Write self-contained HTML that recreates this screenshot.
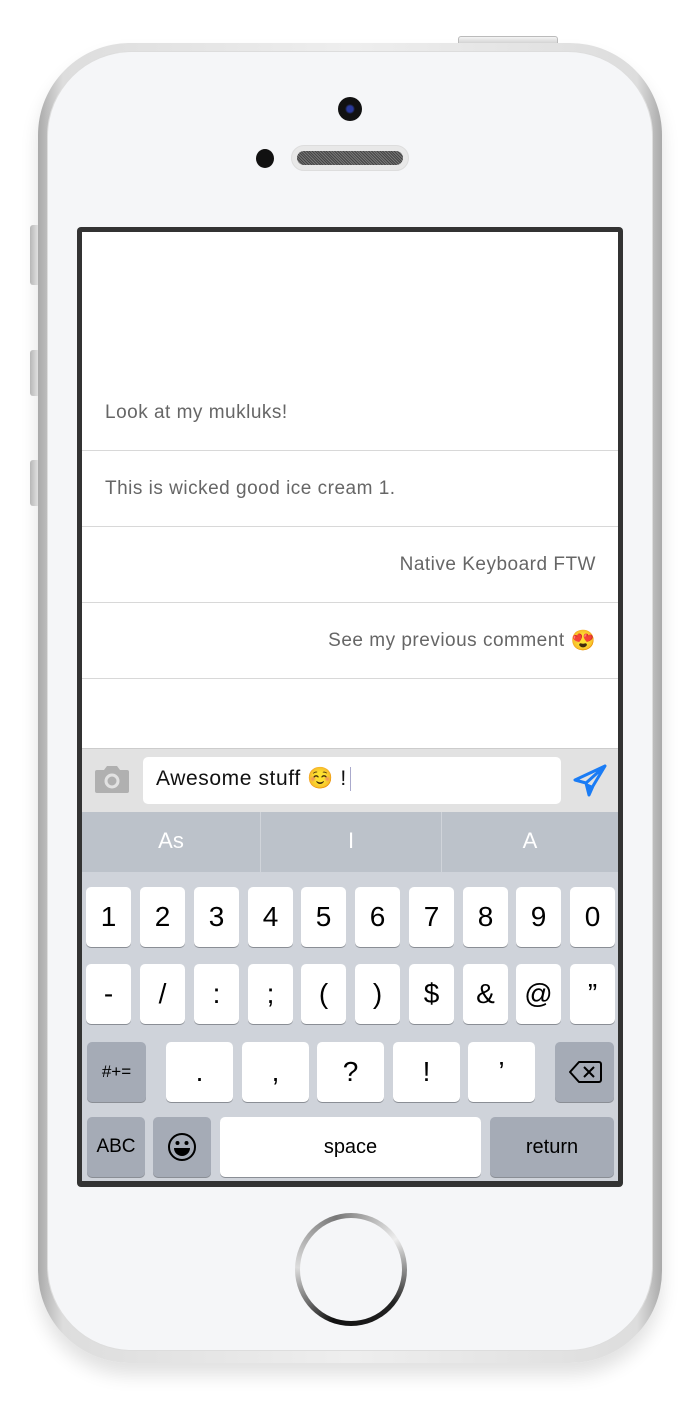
<!DOCTYPE html><html><head><style>
*{margin:0;padding:0;box-sizing:border-box}
body{width:700px;height:1413px;background:#fff;position:relative;overflow:hidden;font-family:"Liberation Sans",sans-serif}
.a{position:absolute}
.key{position:absolute;background:#fff;border-radius:5px;box-shadow:0 1px 0 #8a8e95;display:flex;align-items:center;justify-content:center;font-size:28px;color:#000}
.dk{background:#a5abb6}
.row{position:absolute;left:82px;width:536px;height:76px;border-bottom:1px solid #d8d8d8;font-size:19px;letter-spacing:.5px;color:#666;padding:0 22px;display:flex;align-items:center}
</style></head><body>
<div class="a" style="left:458px;top:36px;width:100px;height:10px;background:linear-gradient(#f4f4f4,#ccc);border-radius:3px 3px 0 0;border:1px solid #bbb"></div>
<div class="a" style="left:30px;top:225px;width:8px;height:60px;background:linear-gradient(90deg,#bbb,#eee);border-radius:3px 0 0 3px"></div>
<div class="a" style="left:30px;top:350px;width:8px;height:46px;background:linear-gradient(90deg,#bbb,#eee);border-radius:3px 0 0 3px"></div>
<div class="a" style="left:30px;top:460px;width:8px;height:46px;background:linear-gradient(90deg,#bbb,#eee);border-radius:3px 0 0 3px"></div>
<div class="a" style="left:38px;top:43px;width:624px;height:1320px;border-radius:92px;background:linear-gradient(90deg,#aaa,#ddd 4%,#eee 50%,#ddd 96%,#aaa);box-shadow:0 12px 18px rgba(0,0,0,.12)"></div>
<div class="a" style="left:48px;top:52px;width:604px;height:1298px;border-radius:84px;background:#f5f6f8;box-shadow:0 0 0 1px #ddd"></div>
<div class="a" style="left:338px;top:97px;width:24px;height:24px;border-radius:50%;background:radial-gradient(circle,#2a3a9a 0 3px,#111 5px)"></div>
<div class="a" style="left:256px;top:149px;width:18px;height:19px;border-radius:50%;background:#111"></div>
<div class="a" style="left:291px;top:145px;width:118px;height:26px;border-radius:13px;background:#e8e8e8;border:1px solid #ddd"></div>
<div class="a" style="left:297px;top:151px;width:106px;height:14px;border-radius:7px;background:repeating-linear-gradient(45deg,#444 0 1px,#777 1px 2px)"></div>
<div class="a" style="left:77px;top:227px;width:546px;height:960px;background:#333;border-radius:4px"></div>
<div class="a" style="left:82px;top:232px;width:536px;height:949px;background:#fff;overflow:hidden"></div>
<div class="row" style="top:375px;padding-left:23px">Look at my mukluks!</div>
<div class="row" style="top:451px;padding-left:23px">This is wicked good ice cream 1.</div>
<div class="row" style="top:527px;justify-content:flex-end">Native Keyboard FTW</div>
<div class="row" style="top:603px;justify-content:flex-end">See my previous comment <span style="font-size:20px;margin-left:6px">😍</span></div>
<div class="a" style="left:82px;top:748px;width:536px;height:64px;background:#e2e2e2;border-top:1px solid #ccc"></div>
<svg class="a" style="left:94px;top:763px" width="36" height="32" viewBox="0 0 36 32"><path d="M3 7h7l3-4h10l3 4h7a2 2 0 0 1 2 2v19a2 2 0 0 1-2 2H3a2 2 0 0 1-2-2V9a2 2 0 0 1 2-2z" fill="#b0b0b0"/><circle cx="18" cy="18" r="6" fill="none" stroke="#e2e2e2" stroke-width="3"/></svg>
<div class="a" style="left:143px;top:757px;width:418px;height:47px;background:#fff;border-radius:5px;font-size:21px;letter-spacing:.6px;color:#111;padding:10px 13px">Awesome stuff <span style="font-size:21px">☺️</span> !<span style="display:inline-block;width:1px;height:24px;background:#aac;vertical-align:middle;margin-left:3px"></span></div>
<svg class="a" style="left:573px;top:764px" width="34" height="34" viewBox="0 0 34 34"><path d="M32 2L2 16l11 3 3 12 4-9zM13 19L32 2 20 22" fill="none" stroke="#1a7cf5" stroke-width="3" stroke-linejoin="round"/><path d="M13 19l3 12 4-9z" fill="#1a7cf5"/></svg>
<div class="a" style="left:82px;top:812px;width:536px;height:60px;background:#bcc2ca;color:#fff;font-size:22px"><span class="a" style="left:0;width:178px;text-align:center;top:16px">As</span><span class="a" style="left:178px;top:0;width:1px;height:60px;background:#d0d4da"></span><span class="a" style="left:179px;width:180px;text-align:center;top:16px">I</span><span class="a" style="left:359px;top:0;width:1px;height:60px;background:#d0d4da"></span><span class="a" style="left:360px;width:176px;text-align:center;top:16px">A</span></div>
<div class="a" style="left:82px;top:872px;width:536px;height:309px;background:#cfd3da"></div>
<div class="key" style="left:86px;top:887px;width:45px;height:60px">1</div>
<div class="key" style="left:140px;top:887px;width:45px;height:60px">2</div>
<div class="key" style="left:194px;top:887px;width:45px;height:60px">3</div>
<div class="key" style="left:248px;top:887px;width:45px;height:60px">4</div>
<div class="key" style="left:301px;top:887px;width:45px;height:60px">5</div>
<div class="key" style="left:355px;top:887px;width:45px;height:60px">6</div>
<div class="key" style="left:409px;top:887px;width:45px;height:60px">7</div>
<div class="key" style="left:463px;top:887px;width:45px;height:60px">8</div>
<div class="key" style="left:516px;top:887px;width:45px;height:60px">9</div>
<div class="key" style="left:570px;top:887px;width:45px;height:60px">0</div>
<div class="key" style="left:86px;top:964px;width:45px;height:60px">-</div>
<div class="key" style="left:140px;top:964px;width:45px;height:60px">/</div>
<div class="key" style="left:194px;top:964px;width:45px;height:60px">:</div>
<div class="key" style="left:248px;top:964px;width:45px;height:60px">;</div>
<div class="key" style="left:301px;top:964px;width:45px;height:60px">(</div>
<div class="key" style="left:355px;top:964px;width:45px;height:60px">)</div>
<div class="key" style="left:409px;top:964px;width:45px;height:60px">$</div>
<div class="key" style="left:463px;top:964px;width:45px;height:60px">&amp;</div>
<div class="key" style="left:516px;top:964px;width:45px;height:60px">@</div>
<div class="key" style="left:570px;top:964px;width:45px;height:60px">”</div>
<div class="key dk" style="left:87px;top:1042px;width:59px;height:60px;font-size:17px">#+=</div>
<div class="key" style="left:166px;top:1042px;width:67px;height:60px">.</div>
<div class="key" style="left:242px;top:1042px;width:67px;height:60px">,</div>
<div class="key" style="left:317px;top:1042px;width:67px;height:60px">?</div>
<div class="key" style="left:393px;top:1042px;width:67px;height:60px">!</div>
<div class="key" style="left:468px;top:1042px;width:67px;height:60px">’</div>
<div class="key dk" style="left:555px;top:1042px;width:59px;height:60px"><svg width="34" height="24" viewBox="0 0 34 24"><path d="M11 2h20a2 2 0 0 1 2 2v16a2 2 0 0 1-2 2H11L2 12z" fill="none" stroke="#000" stroke-width="2" stroke-linejoin="round"/><path d="M16 7l10 10M26 7L16 17" stroke="#000" stroke-width="2"/></svg></div>
<div class="key dk" style="left:87px;top:1117px;width:58px;height:60px;font-size:19px">ABC</div>
<div class="key dk" style="left:153px;top:1117px;width:58px;height:60px"><svg width="30" height="30" viewBox="0 0 30 30"><circle cx="15" cy="15" r="13" fill="none" stroke="#000" stroke-width="2"/><circle cx="10.5" cy="11" r="2"/><circle cx="19.5" cy="11" r="2"/><path d="M7 16h16a8 8 0 0 1-16 0z"/></svg></div>
<div class="key" style="left:220px;top:1117px;width:261px;height:60px;font-size:20px">space</div>
<div class="key dk" style="left:490px;top:1117px;width:124px;height:60px;font-size:20px">return</div>
<div class="a" style="left:295px;top:1213px;width:112px;height:113px;border-radius:50%;background:conic-gradient(from 200deg,#111,#ddd,#777,#eee,#222,#111);"></div>
<div class="a" style="left:300px;top:1218px;width:102px;height:103px;border-radius:50%;background:#f5f6f8"></div>
</body></html>
